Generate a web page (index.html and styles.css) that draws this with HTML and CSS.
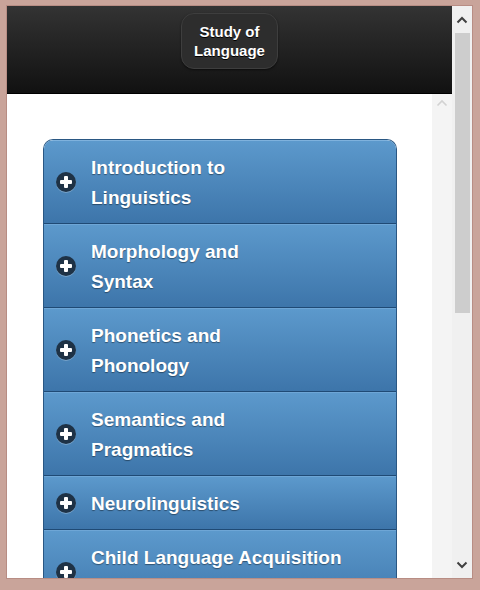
FILE: index.html
```html
<!DOCTYPE html>
<html>
<head>
<meta charset="utf-8">
<link rel="stylesheet" href="styles.css">
</head>
<body>
<div class="window">
  <div class="main">
    <header class="header">
      <div class="title">Study of<br>Language</div>
    </header>
    <div class="content">
      <div class="page">
        <ul class="list">
          <li class="item"><span class="icon"></span><span class="label">Introduction to<br>Linguistics</span></li>
          <li class="item"><span class="icon"></span><span class="label">Morphology and<br>Syntax</span></li>
          <li class="item"><span class="icon"></span><span class="label">Phonetics and<br>Phonology</span></li>
          <li class="item"><span class="icon"></span><span class="label">Semantics and<br>Pragmatics</span></li>
          <li class="item"><span class="icon"></span><span class="label">Neurolinguistics</span></li>
          <li class="item item-tall"><span class="icon"></span><span class="label">Child Language Acquisition</span></li>
        </ul>
      </div>
      <div class="inner-scroll">
        <svg class="arrow-faint" width="12" height="8" viewBox="0 0 12 8"><path d="M1.5 6.5 L6 2 L10.5 6.5" fill="none" stroke="#d2d2d2" stroke-width="1.6"/></svg>
      </div>
    </div>
  </div>
  <div class="scrollbar">
    <div class="sb-btn">
      <svg width="12" height="8" viewBox="0 0 12 8"><path d="M1.5 6.5 L6 2 L10.5 6.5" fill="none" stroke="#404040" stroke-width="2"/></svg>
    </div>
    <div class="sb-track">
      <div class="sb-thumb"></div>
    </div>
    <div class="sb-btn">
      <svg width="12" height="8" viewBox="0 0 12 8"><path d="M1.5 1.5 L6 6 L10.5 1.5" fill="none" stroke="#404040" stroke-width="2"/></svg>
    </div>
  </div>
</div>
</body>
</html>
```
FILE: styles.css
```css
html, body {
  margin: 0;
  padding: 0;
}
body {
  width: 480px;
  height: 590px;
  background: #c9a49a;
  font-family: "Liberation Sans", Arial, sans-serif;
  overflow: hidden;
}
.window {
  margin: 6px 8px 0 7px;
  width: 465px;
  height: 572px;
  display: flex;
  background: #fff;
  box-shadow: 0 0 0 1px #b88d84;
}
.main {
  width: 445px;
  display: flex;
  flex-direction: column;
}
.header {
  height: 88px;
  flex: none;
  background: linear-gradient(#333333, #111111);
  border-bottom: 1px solid #000;
  display: flex;
  justify-content: center;
  align-items: flex-start;
  padding-top: 7px;
  box-sizing: border-box;
}
.title {
  width: 97px;
  height: 56px;
  box-sizing: border-box;
  border-radius: 13px;
  background: #2d2d2d;
  border: 1px solid #3e3e3e;
  box-shadow: 0 1px 2px rgba(0,0,0,.5);
  color: #fff;
  font-weight: bold;
  font-size: 15px;
  line-height: 19px;
  text-align: center;
  padding-top: 8px;
  text-shadow: 0 1px 0 #000;
}
.content {
  flex: 1;
  display: flex;
  overflow: hidden;
  background: #fff;
}
.page {
  flex: 1;
  padding: 45px 0 0 36px;
}
.list {
  list-style: none;
  margin: 0;
  padding: 0;
  width: 354px;
  border: 1px solid #2a5783;
  border-bottom: none;
  border-radius: 10px 10px 0 0;
  overflow: hidden;
  box-sizing: border-box;
}
.item {
  position: relative;
  background: linear-gradient(#5c99cc, #3d75aa);
  border-top: 1px solid #6ea6d6;
  border-bottom: 1px solid #1f4a75;
  color: #fff;
  font-weight: bold;
  font-size: 19px;
  line-height: 30px;
  padding: 12px 0 10px 47px;
  text-shadow: 0 1px 1px rgba(0,0,0,.4);
  display: flex;
  align-items: center;
}
.item:first-child {
  border-top-color: #7fb2dd;
}
.item-tall {
  align-items: flex-start;
  min-height: 60px;
}
.icon {
  position: absolute;
  left: 12px;
  top: 50%;
  margin-top: -10px;
  width: 20px;
  height: 20px;
  border-radius: 50%;
  background: #1e3246;
  box-shadow: 0 1px 0 rgba(255,255,255,.25);
}
.icon::before, .icon::after {
  content: "";
  position: absolute;
  background: #fff;
  border-radius: 1px;
}
.icon::before {
  left: 4px;
  top: 8px;
  width: 12px;
  height: 4px;
}
.icon::after {
  left: 8px;
  top: 4px;
  width: 4px;
  height: 12px;
}
.inner-scroll {
  width: 20px;
  flex: none;
  background: #f4f4f4;
  display: flex;
  justify-content: center;
  padding-top: 5px;
  box-sizing: border-box;
}
.arrow-faint {
  display: block;
}
.scrollbar {
  width: 20px;
  background: #f0f0f0;
  display: flex;
  flex-direction: column;
}
.sb-btn {
  height: 27px;
  display: flex;
  align-items: center;
  justify-content: center;
  flex: none;
}
.sb-track {
  flex: 1;
  padding: 0 2px 0 3px;
}
.sb-thumb {
  height: 280px;
  background: #cdcdcd;
}
```
